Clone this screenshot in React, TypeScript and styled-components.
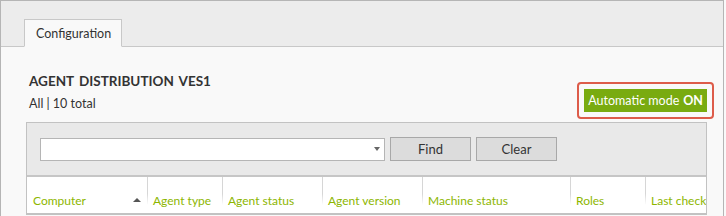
import styled, { createGlobalStyle } from "styled-components";

const Global = createGlobalStyle`
  html, body { margin: 0; padding: 0; background: #f9f9f9; }
  body { font-family: Lato, "Open Sans", sans-serif; font-size: 12px; color: #333; }
`;

const Frame = styled.div`
  width: 722px;
  height: 240px;
  border: 1px solid #b5b5b5;
  border-bottom: none;
  background: #f9f9f9;
  overflow: hidden;
`;

const TabStrip = styled.div`
  height: 45px;
  background: #ececec;
  border-bottom: 1px solid #c8c8c8;
  display: flex;
  align-items: flex-end;
  padding-left: 23px;
`;

const Tab = styled.div`
  height: 26px;
  padding: 0 10px 0 11px;
  margin-bottom: -1px;
  background: #f9f9f9;
  border: 1px solid #c8c8c8;
  border-bottom: 1px solid #f9f9f9;
  display: flex;
  align-items: center;
  font-size: 12.5px;
  color: #333;
`;

const Body = styled.div`
  padding: 0 16px 0 25px;
`;

const Header = styled.div`
  display: flex;
  justify-content: space-between;
  align-items: flex-end;
  padding-top: 26px;
  padding-left: 3px;
`;

const Titles = styled.div`
  display: flex;
  flex-direction: column;
  gap: 7px;
  padding-bottom: 11px;
`;

const Title = styled.div`
  font-weight: 700;
  font-size: 13.5px;
  color: #333;
  word-spacing: 2px;
`;

const Sub = styled.div`
  font-size: 12.5px;
  color: #333;
`;

const Highlight = styled.div`
  border: 2px solid #dd5c4a;
  border-radius: 4px;
  padding: 5px 5px;
  margin-right: -7px;
  margin-bottom: 3px;
`;

const ModeButton = styled.div`
  background: #79ab10;
  color: #fff;
  height: 23px;
  padding: 0 4px;
  display: flex;
  align-items: center;
  font-size: 12.5px;
  b { margin-left: 4px; font-weight: 700; }
`;

const Panel = styled.div`
  border: 1px solid #c2c2c2;
  background: #fff;
`;

const Filter = styled.div`
  background: #e9e9e9;
  height: 52px;
  border-bottom: 2px solid #c6c6c6;
  display: flex;
  align-items: center;
  gap: 5px;
  padding-left: 13px;
`;

const Combo = styled.div`
  width: 339px;
  height: 21px;
  background: #fff;
  border: 1px solid #b5b5b5;
  display: flex;
  justify-content: flex-end;
  align-items: center;
  padding-right: 4px;
  box-sizing: content-box;
`;

const Caret = styled.span`
  width: 0;
  height: 0;
  border-left: 3.5px solid transparent;
  border-right: 3.5px solid transparent;
  border-top: 4px solid #666;
`;

const Btn = styled.div`
  width: 79px;
  height: 22px;
  background: #dcdcdc;
  border: 1px solid #a8a8a8;
  display: flex;
  align-items: center;
  justify-content: center;
  font-size: 13px;
  color: #333;
  margin-top: -1px;
`;

const HeadRow = styled.div`
  display: flex;
  height: 36px;
  border-bottom: 1px solid #c2c2c2;
  overflow: hidden;
`;

const Col = styled.div<{ $w?: number; $first?: boolean }>`
  flex: ${(p) => (p.$w ? `0 0 ${p.$w}px` : "1 1 0")};
  min-width: 0;
  box-sizing: border-box;
  position: relative;
  display: flex;
  align-items: center;
  padding: 10px ${(p) => (p.$w ? 6 : 0)}px 0 6px;
  color: #8db600;
  font-size: 12px;
  white-space: nowrap;
  &::before {
    content: "";
    display: ${(p) => (p.$first ? "none" : "block")};
    position: absolute;
    left: 0;
    top: 0;
    width: 1px;
    height: 28px;
    background: linear-gradient(#d6d6d6, #d6d6d6 60%, #fff);
  }
`;

const SortUp = styled.span`
  margin-left: auto;
  margin-right: 0;
  width: 0;
  height: 0;
  border-left: 4px solid transparent;
  border-right: 4px solid transparent;
  border-bottom: 4px solid #555;
`;

const cols = [
  { name: "Agent type", w: 75 },
  { name: "Agent status", w: 100 },
  { name: "Agent version", w: 100 },
  { name: "Machine status", w: 148 },
  { name: "Roles", w: 75 },
];

export default function App() {
  return (
    <>
      <Global />
      <Frame>
        <TabStrip>
          <Tab>Configuration</Tab>
        </TabStrip>
        <Body>
          <Header>
            <Titles>
              <Title>AGENT DISTRIBUTION VES1</Title>
              <Sub>All | 10 total</Sub>
            </Titles>
            <Highlight>
              <ModeButton>
                Automatic mode<b>ON</b>
              </ModeButton>
            </Highlight>
          </Header>
          <Panel>
            <Filter>
              <Combo>
                <Caret />
              </Combo>
              <Btn>Find</Btn>
              <Btn>Clear</Btn>
            </Filter>
            <HeadRow>
              <Col $w={120} $first>
                Computer
                <SortUp />
              </Col>
              {cols.map((c) => (
                <Col key={c.name} $w={c.w}>
                  {c.name}
                </Col>
              ))}
              <Col>Last check</Col>
            </HeadRow>
          </Panel>
        </Body>
      </Frame>
    </>
  );
}
